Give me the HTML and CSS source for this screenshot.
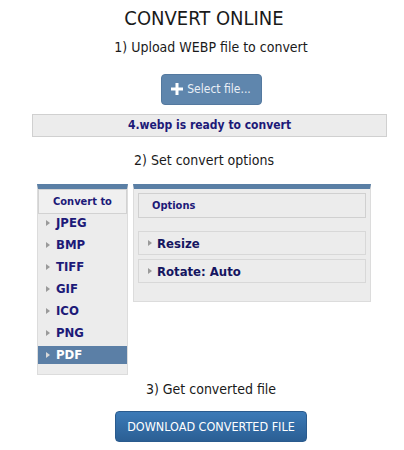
FILE: index.html
```html
<!DOCTYPE html>
<html lang="en">
<head>
<meta charset="utf-8">
<title>Convert online</title>
<link rel="stylesheet" href="styles.css">
</head>
<body>
<main class="page">
  <h1 class="title">CONVERT ONLINE</h1>
  <p class="step step-shift">1) Upload WEBP file to convert</p>
  <div class="row-shift">
    <button class="btn-select" type="button">
      <svg class="plus" width="12" height="12" viewBox="0 0 12 12" aria-hidden="true"><path d="M4.5 0h3v4.5H12v3H7.5V12h-3V7.5H0v-3h4.5z" fill="#fff"/></svg>
      <span>Select file...</span>
    </button>
  </div>
  <div class="status">4.webp is ready to convert</div>
  <p class="step step-2">2) Set convert options</p>
  <div class="panels">
    <section class="formats">
      <div class="formats-head">Convert to</div>
      <ul class="format-list">
        <li class="format"><span class="arrow"></span>JPEG</li>
        <li class="format"><span class="arrow"></span>BMP</li>
        <li class="format"><span class="arrow"></span>TIFF</li>
        <li class="format"><span class="arrow"></span>GIF</li>
        <li class="format"><span class="arrow"></span>ICO</li>
        <li class="format"><span class="arrow"></span>PNG</li>
        <li class="format selected"><span class="arrow"></span>PDF</li>
      </ul>
    </section>
    <section class="options">
      <div class="options-head">Options</div>
      <div class="opt"><span class="arrow"></span>Resize</div>
      <div class="opt"><span class="arrow"></span>Rotate: Auto</div>
    </section>
  </div>
  <p class="step step-3 step-shift">3) Get converted file</p>
  <div class="row-shift">
    <button class="btn-download" type="button">DOWNLOAD CONVERTED FILE</button>
  </div>
</main>
</body>
</html>
```
FILE: styles.css
```css
* { box-sizing: border-box; }
html, body { margin: 0; padding: 0; background: #fff; }
body {
  font-family: "DejaVu Sans Condensed", "DejaVu Sans", sans-serif;
  font-stretch: condensed;
  color: #1a1a1a;
}
.page {
  width: 404px;
  text-align: center;
  padding-top: 6px;
}
.title {
  margin: 0;
  font-size: 20px;
  line-height: 24px;
  font-weight: normal;
  padding-left: 4px;
}
.step {
  margin: 7px 0 0;
  font-size: 14px;
  line-height: 20px;
}
.step-shift { padding-left: 18px; }
.row-shift { padding-left: 18px; }
.btn-select {
  margin-top: 17px;
  width: 101px;
  height: 31px;
  border: 1px solid #54799f;
  border-radius: 4px;
  background: #5f86ad;
  color: #e9eff6;
  font-family: inherit;
  font-stretch: condensed;
  font-size: 12px;
  display: inline-flex;
  align-items: center;
  justify-content: center;
  gap: 4px;
  padding: 0 0 1px;
}
.plus { display: block; }
.status {
  margin: 9px 0 0 32px;
  width: 355px;
  height: 23px;
  border: 1px solid #d0d0d0;
  background: #ececec;
  color: #1d1a78;
  font-weight: bold;
  font-size: 12px;
  line-height: 21px;
}
.step-2 { margin-top: 13px; padding-left: 4px; }
.panels {
  margin: 14px 0 0 37px;
  display: flex;
  gap: 5px;
  align-items: flex-start;
  text-align: left;
}
.formats, .options {
  background: #ececec;
  border: 1px solid #dcdcdc;
  border-top: 5px solid #5a7fa5;
}
.formats {
  width: 91px;
  padding: 0 0 10px;
}
.formats-head {
  height: 25px;
  border: 1px solid #d2d2d2;
  background: #f0f0f0;
  color: #1d1a78;
  font-weight: bold;
  font-size: 11px;
  line-height: 23px;
  text-align: center;
}
.format-list {
  list-style: none;
  margin: 0;
  padding: 0;
}
.format {
  height: 18px;
  margin-top: 4px;
  line-height: 18px;
  font-size: 13px;
  font-weight: bold;
  color: #1d1a78;
  padding-left: 8px;
  display: flex;
  align-items: center;
}
.format:first-child { margin-top: 0; }
.arrow {
  width: 0; height: 0;
  border-top: 3px solid transparent;
  border-bottom: 3px solid transparent;
  border-left: 4px solid #9a9a9a;
  margin-right: 6px;
}
.format.selected {
  background: #5b7fa6;
  color: #fff;
}
.format.selected .arrow { border-left-color: #d8d8d8; }
.options {
  width: 238px;
  padding: 4px 4px 18px;
}
.options-head {
  height: 25px;
  border: 1px solid #d0d0d0;
  color: #1d1a78;
  font-weight: bold;
  font-size: 11px;
  line-height: 23px;
  padding-left: 13px;
}
.opt {
  margin-top: 13px;
  height: 24px;
  border: 1px solid #d8d8d8;
  color: #151560;
  font-weight: bold;
  font-size: 13px;
  display: flex;
  align-items: center;
  padding-left: 9px;
}
.opt + .opt { margin-top: 4px; }
.opt .arrow { margin-right: 5px; }
.step-3 { margin-top: 4px; }
.btn-download {
  margin-top: 12px;
  width: 192px;
  height: 31px;
  border: 1px solid #2a5b8e;
  border-radius: 4px;
  background: linear-gradient(#3c7ab7, #2b5f94);
  color: #fff;
  font-family: inherit;
  font-stretch: condensed;
  font-size: 12.5px;
  padding: 0;
}
```
